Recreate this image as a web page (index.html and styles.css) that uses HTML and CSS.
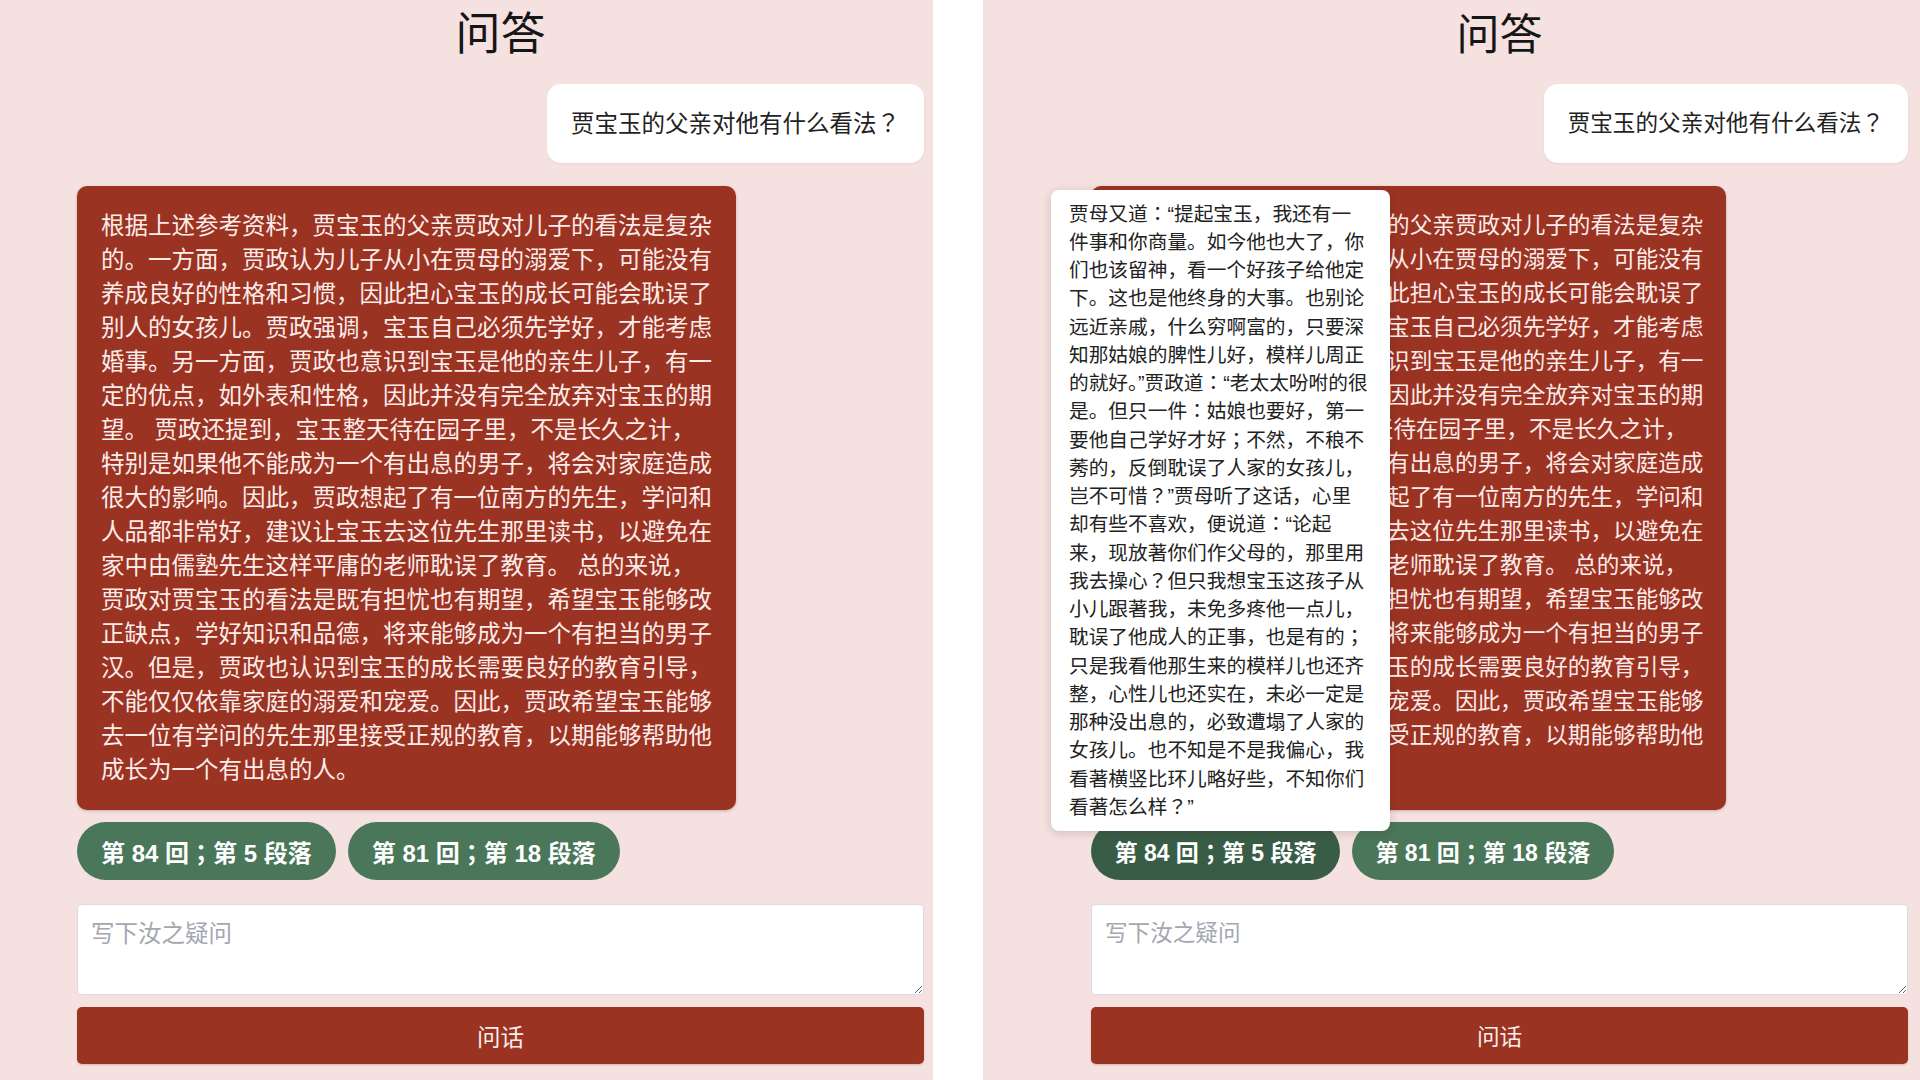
FILE: index.html
```html
<!DOCTYPE html>
<html lang="zh-CN">
<head>
<meta charset="utf-8">
<title>问答</title>
<link rel="stylesheet" href="styles.css">
</head>
<body>
<div class="stage">
  <section class="panel panel--a">
    <h1 class="title">问答</h1>
    <div class="chat">
      <div class="msg msg--user">贾宝玉的父亲对他有什么看法<span class="fw" lang="ja">？</span></div>
      <div class="msg msg--bot">根据上述参考资料，贾宝玉的父亲贾政对儿子的看法是复杂<br>的。一方面，贾政认为儿子从小在贾母的溺爱下，可能没有<br>养成良好的性格和习惯，因此担心宝玉的成长可能会耽误了<br>别人的女孩儿。贾政强调，宝玉自己必须先学好，才能考虑<br>婚事。另一方面，贾政也意识到宝玉是他的亲生儿子，有一<br>定的优点，如外表和性格，因此并没有完全放弃对宝玉的期<br>望。 贾政还提到，宝玉整天待在园子里，不是长久之计，<br>特别是如果他不能成为一个有出息的男子，将会对家庭造成<br>很大的影响。因此，贾政想起了有一位南方的先生，学问和<br>人品都非常好，建议让宝玉去这位先生那里读书，以避免在<br>家中由儒塾先生这样平庸的老师耽误了教育。 总的来说，<br>贾政对贾宝玉的看法是既有担忧也有期望，希望宝玉能够改<br>正缺点，学好知识和品德，将来能够成为一个有担当的男子<br>汉。但是，贾政也认识到宝玉的成长需要良好的教育引导，<br>不能仅仅依靠家庭的溺爱和宠爱。因此，贾政希望宝玉能够<br>去一位有学问的先生那里接受正规的教育，以期能够帮助他<br>成长为一个有出息的人。</div>
      <div class="refs">
        <button class="ref" type="button">第 84 回<span class="fw" lang="ja">；</span>第 5 段落</button>
        <button class="ref" type="button">第 81 回<span class="fw" lang="ja">；</span>第 18 段落</button>
      </div>
    </div>
    <form class="ask">
      <textarea class="ask__input" placeholder="写下汝之疑问"></textarea>
      <button class="ask__send" type="button">问话</button>
    </form>
  </section>

  <section class="panel panel--b">
    <h1 class="title">问答</h1>
    <div class="chat">
      <div class="msg msg--user">贾宝玉的父亲对他有什么看法<span class="fw" lang="ja">？</span></div>
      <div class="msg msg--bot">根据上述参考资料，贾宝玉的父亲贾政对儿子的看法是复杂<br>的。一方面，贾政认为儿子从小在贾母的溺爱下，可能没有<br>养成良好的性格和习惯，因此担心宝玉的成长可能会耽误了<br>别人的女孩儿。贾政强调，宝玉自己必须先学好，才能考虑<br>婚事。另一方面，贾政也意识到宝玉是他的亲生儿子，有一<br>定的优点，如外表和性格，因此并没有完全放弃对宝玉的期<br>望。 贾政还提到，宝玉整天待在园子里，不是长久之计，<br>特别是如果他不能成为一个有出息的男子，将会对家庭造成<br>很大的影响。因此，贾政想起了有一位南方的先生，学问和<br>人品都非常好，建议让宝玉去这位先生那里读书，以避免在<br>家中由儒塾先生这样平庸的老师耽误了教育。 总的来说，<br>贾政对贾宝玉的看法是既有担忧也有期望，希望宝玉能够改<br>正缺点，学好知识和品德，将来能够成为一个有担当的男子<br>汉。但是，贾政也认识到宝玉的成长需要良好的教育引导，<br>不能仅仅依靠家庭的溺爱和宠爱。因此，贾政希望宝玉能够<br>去一位有学问的先生那里接受正规的教育，以期能够帮助他<br>成长为一个有出息的人。</div>
      <div class="refs">
        <button class="ref ref--active" type="button">第 84 回<span class="fw" lang="ja">；</span>第 5 段落</button>
        <button class="ref" type="button">第 81 回<span class="fw" lang="ja">；</span>第 18 段落</button>
        <div class="tip">贾母又道<span class="fw" lang="ja">：</span>“提起宝玉，我还有一<br>件事和你商量。如今他也大了，你<br>们也该留神，看一个好孩子给他定<br>下。这也是他终身的大事。也别论<br>远近亲戚，什么穷啊富的，只要深<br>知那姑娘的脾性儿好，模样儿周正<br>的就好。”贾政道<span class="fw" lang="ja">：</span>“老太太吩咐的很<br>是。但只一件<span class="fw" lang="ja">：</span>姑娘也要好，第一<br>要他自己学好才好<span class="fw" lang="ja">；</span>不然，不稂不<br>莠的，反倒耽误了人家的女孩儿，<br>岂不可惜<span class="fw" lang="ja">？</span>”贾母听了这话，心里<br>却有些不喜欢，便说道<span class="fw" lang="ja">：</span>“论起<br>来，现放著你们作父母的，那里用<br>我去操心<span class="fw" lang="ja">？</span>但只我想宝玉这孩子从<br>小儿跟著我，未免多疼他一点儿，<br>耽误了他成人的正事，也是有的<span class="fw" lang="ja">；</span><br>只是我看他那生来的模样儿也还齐<br>整，心性儿也还实在，未必一定是<br>那种没出息的，必致遭塌了人家的<br>女孩儿。也不知是不是我偏心，我<br>看著横竖比环儿略好些，不知你们<br>看著怎么样<span class="fw" lang="ja">？</span>”</div>
      </div>
    </div>
    <form class="ask">
      <textarea class="ask__input" placeholder="写下汝之疑问"></textarea>
      <button class="ask__send" type="button">问话</button>
    </form>
  </section>
</div>
</body>
</html>
```

FILE: styles.css
```css
:root {
  --pink: #f4e1e0;
  --red: #9b3322;
  --green: #4a765a;
  --green-dark: #385c46;
  --ink: #1e1e1e;
}

html, body {
  margin: 0;
  height: 100%;
  background: #ffffff;
}

body {
  font-family: "Liberation Sans", "Noto Sans CJK SC", sans-serif;
  color: var(--ink);
  overflow: hidden;
}

/* centred full-width punctuation (？；：) as in the reference;
   Liberation Sans first keeps the line metrics of the parent text */
.fw {
  font-family: "Liberation Sans", "Noto Sans CJK JP", sans-serif;
}

.stage {
  display: flex;
  gap: 50px;
  height: 1080px;
}

.panel {
  box-sizing: border-box;
  height: 1080px;
  background: var(--pink);
  display: flex;
  flex-direction: column;
}

.panel--a {
  width: 933px;
  padding: 0 9px 0 77px;
  --fs: 23.5px;
  --title-fs: 45px;
  --chip-fs: 24px;
  --chip-pad: 24px;
  --bot-w: 659px;
  --bot-pad-l: 24px;
  --bot-pad-r: 24px;
}

.panel--b {
  width: 937px;
  padding: 0 12px 0 108px;
  --fs: 22.6px;
  --title-fs: 43px;
  --chip-fs: 23px;
  --chip-pad: 23.5px;
  --bot-w: 635px;
  --bot-pad-l: 25px;
  --bot-pad-r: 22px;
}

.title {
  margin: 0;
  padding-top: 3px;
  font-size: var(--title-fs);
  line-height: 64px;
  font-weight: 400;
  text-align: center;
  color: #161616;
}

.chat {
  margin-top: 17px;
  display: flex;
  flex-direction: column;
  align-items: flex-start;
}

.msg {
  box-sizing: border-box;
  font-size: var(--fs);
  line-height: 34px;
  white-space: nowrap;
}

.msg--user {
  align-self: flex-end;
  background: #ffffff;
  color: #222222;
  padding: 23px 24px 22px;
  border-radius: 14px;
  box-shadow: 0 1px 2px rgba(120, 60, 60, 0.08);
}

.msg--bot {
  margin-top: 23px;
  width: var(--bot-w);
  background: var(--red);
  color: #fbecea;
  padding: 23px var(--bot-pad-r) 23px var(--bot-pad-l);
  border-radius: 10px;
  box-shadow: 0 1px 3px rgba(80, 20, 10, 0.25);
}

.refs {
  position: relative;
  margin-top: 12px;
  display: flex;
  gap: 12px;
}

.ref {
  height: 58px;
  padding: 0 var(--chip-pad);
  border: none;
  border-radius: 29px;
  background: var(--green);
  color: #ffffff;
  font-family: inherit;
  font-size: var(--chip-fs);
  font-weight: 700;
  white-space: nowrap;
  cursor: pointer;
}

.ref--active {
  background: var(--green-dark);
}

.tip {
  position: absolute;
  left: -40px;
  bottom: 49px;
  width: 339px;
  box-sizing: border-box;
  padding: 10px 12px 10px 18px;
  background: #ffffff;
  color: #222222;
  font-size: 19.7px;
  line-height: 28.25px;
  white-space: nowrap;
  border-radius: 8px;
  box-shadow: 0 2px 10px rgba(60, 20, 20, 0.18);
  z-index: 2;
}

.ask {
  margin: 24px 0 0;
  display: flex;
  flex-direction: column;
  gap: 12px;
}

.ask__input {
  box-sizing: border-box;
  display: block;
  width: 100%;
  height: 91px;
  margin: 0;
  padding: 12px 13px;
  border: 1px solid #dcdce2;
  border-radius: 4px;
  background: #ffffff;
  font-family: inherit;
  font-size: var(--fs);
  line-height: 34px;
  color: #333333;
  resize: vertical;
}

.ask__input::placeholder {
  color: #a4a7b0;
}

.ask__send {
  height: 57px;
  border: none;
  border-radius: 5px;
  background: var(--red);
  color: #f8ecea;
  font-family: inherit;
  font-size: var(--fs);
  box-shadow: 0 1px 2px rgba(80, 20, 10, 0.2);
  cursor: pointer;
}
```
